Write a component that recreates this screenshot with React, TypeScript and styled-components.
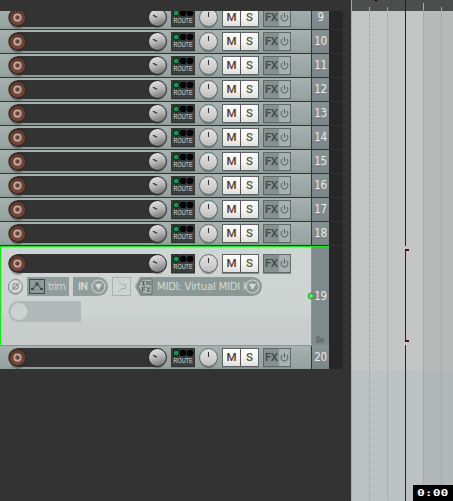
import React from "react";
import styled, { createGlobalStyle } from "styled-components";

const GlobalStyle = createGlobalStyle`
  html, body { margin: 0; padding: 0; background: #333; overflow: hidden; }
  * { box-sizing: border-box; }
`;

const Screen = styled.div`
  display: flex;
  width: 453px;
  height: 501px;
  background: #333333;
  overflow: hidden;
  font-family: "DejaVu Sans Condensed", "DejaVu Sans", sans-serif;
`;

const TrackPanel = styled.div`
  width: 351px;
  height: 501px;
  padding-top: 11px;
`;

const TrackList = styled.div`
  height: 359px;
  overflow: hidden;
  display: flex;
  flex-direction: column;
  justify-content: flex-end;
`;

const TrackRow = styled.div<{ $last?: boolean }>`
  display: flex;
  flex: none;
  width: 343px;
  height: ${(p) => (p.$last ? 23 : 24)}px;
  margin-bottom: ${(p) => (p.$last ? 1 : 0)}px;
  border-bottom: ${(p) => (p.$last ? "none" : "1px solid #303534")};
  background: #262626;
`;

const Strip = styled.div`
  width: 312px;
  height: 23px;
  padding-top: 2px;
  border-right: 1px solid #303534;
  background: linear-gradient(#a5b0af 0 2px, #9da9a8 10px, #97a3a1 21px, #8f9e99 21px);
`;

const NumberCell = styled.div<{ $tall?: boolean }>`
  position: relative;
  width: 17px;
  height: ${(p) => (p.$tall ? 98 : 23)}px;
  display: flex;
  align-items: center;
  justify-content: center;
  background: ${(p) => (p.$tall ? "#80898b" : "linear-gradient(#879294, #7b8587)")};
  color: #e9ebeb;
  font-size: 11.5px;
  line-height: 14px;
  letter-spacing: -0.4px;
  padding-bottom: ${(p) => (p.$tall ? 0 : 1)}px;
`;

const Controls = styled.div`
  display: flex;
  height: 20px;
  padding-left: 8px;
`;

const NameBar = styled.div`
  width: 141px;
  height: 19px;
  margin: 0 -10px 0 -10px;
  background: #333333;
`;

const Dial = styled.svg<{ $gap?: number }>`
  display: block;
  flex: none;
  position: relative;
  overflow: visible;
  width: 19px;
  height: 19px;
  margin-left: ${(p) => p.$gap ?? 0}px;
`;

const Route = styled.div`
  display: flex;
  flex-direction: column;
  align-items: center;
  width: 24px;
  height: 19px;
  margin-left: 4px;
  background: #3b3f3f;
  border: 1px solid #303333;
  box-shadow: 0 1px #7d8986;
`;

const RouteLights = styled.svg`
  display: block;
  flex: none;
  width: 22px;
  height: 8px;
`;

const RouteLabel = styled.span`
  color: #dcdfde;
  font: 8px/8px "Liberation Sans", sans-serif;
  transform: scaleX(0.68);
`;

const ButtonPair = styled.div`
  display: flex;
  width: 37px;
  height: 19px;
  margin-left: 4px;
  border: 1px solid #5c6262;
  box-shadow: 0 1px #828d8b;
`;

const PushButton = styled.div<{ $color: string; $first?: boolean }>`
  width: ${(p) => (p.$first ? 18 : 17)}px;
  border-right: ${(p) => (p.$first ? "1px solid #555" : "none")};
  background: linear-gradient(#ffffff, #f2f2f2 60%, #dfdfdf);
  color: ${(p) => p.$color};
  font: 500 11.5px/17px Roboto, sans-serif;
  text-align: center;
`;

const FxBox = styled.div`
  display: flex;
  width: 28px;
  height: 19px;
  margin-left: 4px;
  border: 1px solid #606968;
  background: #a8b2b1;
  box-shadow: 0 1px #84908e;
`;

const FxLabel = styled.div`
  width: 15px;
  padding-left: 1px;
  background: #85918f;
  color: #414847;
  font: 500 11.5px/17px Roboto, sans-serif;
  letter-spacing: -0.6px;
`;

const PowerIcon = styled.svg`
  width: 11px;
  height: 17px;
`;

const SelectedRow = styled.div`
  display: flex;
  flex: none;
  width: 343px;
  height: 100px;
  background: #262626;
`;

const SelectedFrame = styled.div`
  position: relative;
  display: flex;
  width: 329px;
  height: 100px;
  border: 1px solid #00f808;
  border-right: none;
`;

const SelectedBody = styled.div`
  width: 311px;
  height: 98px;
  padding-top: 7px;
  border-right: 1px solid #00f808;
  background: linear-gradient(#cfd5d3 0, #ccd3d1 70px, #c9cdcb 70px, #c8cccc 98px);

  ${Controls} {
    padding-left: 7px;
    height: 23px;
  }
`;

const InputLine = styled.div`
  display: flex;
  height: 19px;
  padding-left: 7px;
  color: #cdd4d2;
`;

const PhaseIcon = styled.svg`
  flex: none;
  width: 15px;
  height: 19px;
  overflow: visible;
`;

const Trim = styled.div`
  display: flex;
  width: 42px;
  height: 19px;
  margin-left: 4px;
  padding: 2px 0 0 2px;
  gap: 3px;
  background: #909d9b;
  font: 11px/16px "DejaVu Sans Condensed", sans-serif;
  letter-spacing: -0.8px;
`;

const EnvelopeIcon = styled.svg`
  display: block;
  flex: none;
  width: 16px;
  height: 15px;
`;

const InputMode = styled.div`
  display: flex;
  width: 35px;
  height: 19px;
  margin-left: 4px;
  padding-left: 5px;
  border-radius: 0 10px 10px 0;
  background: #909d9b;
  font: 700 10.5px/19px Roboto, sans-serif;
  letter-spacing: -0.5px;
`;

const DropIcon = styled.svg`
  display: block;
  position: relative;
  flex: none;
  width: 15px;
  height: 19px;
  margin-left: auto;
  margin-right: 2px;
`;

const MonitorIcon = styled.svg`
  display: block;
  flex: none;
  width: 19px;
  height: 19px;
  margin-left: 4px;
`;

const InputSource = styled.div`
  display: flex;
  width: 127px;
  height: 19px;
  margin-left: 4px;
  border-radius: 0 10px 10px 0;
  background: #8b9896;
  clip-path: polygon(0 50%, 5px 0, 100% 0, 100% 100%, 5px 100%);
`;

const InFxIcon = styled.svg`
  flex: none;
  width: 18px;
  height: 19px;
`;

const SourceName = styled.div`
  width: 88px;
  margin-left: 4px;
  white-space: nowrap;
  color: #d5dbd9;
  font: 11px/19px "DejaVu Sans Condensed", sans-serif;
  letter-spacing: -0.16px;
`;

const Meter = styled.svg`
  display: block;
  width: 73px;
  height: 23px;
  margin: 4px 0 0 7px;
`;

const SelectionDot = styled.svg`
  position: absolute;
  left: 306px;
  top: 45px;
  width: 8px;
  height: 8px;
`;

const FolderIcon = styled.svg`
  position: absolute;
  right: 5px;
  bottom: 2px;
  width: 8px;
  height: 7px;
`;

const Arrange = styled.div`
  position: relative;
  width: 102px;
  height: 501px;
`;

const Timeline = styled.svg`
  display: block;
`;

const TimeBadge = styled.div`
  position: absolute;
  right: 0;
  bottom: 0;
  width: 40px;
  height: 16px;
  padding-left: 4px;
  background: #000;
`;

const TimeText = styled.div`
  width: 24px;
  color: #fff;
  font: 700 9.5px/15px "DejaVu Sans Mono", monospace;
  transform: scaleX(1.37);
  transform-origin: left;
`;

function RecordArm() {
  return (
    <Dial viewBox="0 0 19 19">
      <ellipse cx="10" cy="12" rx="8.5" ry="9" fill="#303533" opacity=".4" />
      <circle cx="9.5" cy="9.5" r="9.2" fill="#2c2a29" />
      <circle cx="9.5" cy="9.4" r="7.9" fill="url(#armFill)" />
      <circle cx="9.5" cy="9.5" r="3.2" fill="#68443a" stroke="#c6aea5" strokeWidth="1.7" />
    </Dial>
  );
}

function Knob({ pan }: { pan?: boolean }) {
  return (
    <Dial viewBox="0 0 19 19" $gap={pan ? 4 : 0}>
      <ellipse cx="9.5" cy="11.5" rx="8.5" ry="8.8" fill="#4d5553" opacity=".45" />
      <circle
        cx="9.5"
        cy="9.5"
        r="9"
        fill={pan ? "url(#panFill)" : "url(#volumeFill)"}
        stroke={pan ? "#636967" : "#202222"}
      />
      {pan ? (
        <path d="M9.5 4v5" stroke="#333" fill="none" />
      ) : (
        <path d="M5 7.2l4 2" stroke="#222" strokeWidth="1.2" fill="none" />
      )}
    </Dial>
  );
}

function TrackControls() {
  return (
    <Controls>
      <RecordArm />
      <NameBar />
      <Knob />
      <Route>
        <RouteLights viewBox="0 0 22 8">
          <circle cx="4.2" cy="4" r="3.4" fill="#07120c" />
          <circle cx="4.2" cy="4" r="2.5" fill="#0b9a50" />
          <circle cx="11" cy="4" r="3.3" fill="#000" />
          <circle cx="18" cy="4" r="3.3" fill="#000" />
        </RouteLights>
        <RouteLabel>ROUTE</RouteLabel>
      </Route>
      <Knob pan />
      <ButtonPair>
        <PushButton $first $color="#57372f">M</PushButton>
        <PushButton $color="#4f5a34">S</PushButton>
      </ButtonPair>
      <FxBox>
        <FxLabel>FX</FxLabel>
        <PowerIcon viewBox="0 0 11 17">
          <path d="M3.4 5.9a3.4 3.4 0 1 0 4.2 0M5.5 4.2v4.3" fill="none" stroke="#4f5958" />
        </PowerIcon>
      </FxBox>
    </Controls>
  );
}

function Track({ number, last }: { number: number; last?: boolean }) {
  return (
    <TrackRow $last={last}>
      <Strip>
        <TrackControls />
      </Strip>
      <NumberCell>{number}</NumberCell>
    </TrackRow>
  );
}

function Dropdown() {
  return (
    <DropIcon viewBox="0 0 15 19">
      <circle cx="7.5" cy="9.5" r="6.5" fill="#8c9997" stroke="#cad1cf" strokeWidth="1.2" />
      <path d="M3.8 6.8h7.4L7.5 13z" fill="#d3dad8" />
    </DropIcon>
  );
}

function SelectedTrack() {
  return (
    <SelectedRow>
      <SelectedFrame>
        <SelectedBody>
          <TrackControls />
          <InputLine>
            <PhaseIcon viewBox="0 0 15 19">
              <circle cx="7.5" cy="10.7" r="7.3" fill="#a4aba9" />
              <circle cx="7.5" cy="9.5" r="7" fill="#d3d8d6" stroke="#7d8684" />
              <circle cx="7.5" cy="9.5" r="2.8" fill="none" stroke="#737c7a" />
              <path d="M3.8 13.2l7.4-7.4" stroke="#737c7a" />
            </PhaseIcon>
            <Trim>
              <EnvelopeIcon viewBox="0 0 16 15">
                <rect x=".5" y=".5" width="15" height="14" fill="#8d9a98" stroke="#414c4a" />
                <path d="M3.5 10L8 4.8l4.5 5.2" fill="none" stroke="#3e4947" />
                <path d="M2 9h3v2H2zM6.5 3.5h3v3h-3zM11 9h3v2h-3z" fill="#3e4947" />
              </EnvelopeIcon>
              trim
            </Trim>
            <InputMode>
              IN
              <Dropdown />
            </InputMode>
            <MonitorIcon viewBox="0 0 19 19">
              <rect x=".5" y=".5" width="18" height="18" fill="none" stroke="#a9b2b0" />
              <path d="M6 4.5h1l3 3h3.5v4H10l-3 3H6" fill="none" stroke="#a4adab" />
            </MonitorIcon>
            <InputSource>
              <InFxIcon viewBox="0 0 18 19">
                <path d="M7 2h10v15H7L3 9.5z" fill="#a9b4b1" stroke="#65716e" />
                <path
                  d="M7 4.5h3M8.5 4.5v3M7 7.5h3M12 8V4l3 4V4M7.5 15v-5H11M7.5 12.5H10M12 10l3 5M15 10l-3 5"
                  stroke="#52605c"
                  fill="none"
                />
              </InFxIcon>
              <SourceName>MIDI: Virtual MIDI k</SourceName>
              <Dropdown />
            </InputSource>
          </InputLine>
          <Meter viewBox="0 0 73 23">
            <path d="M11 1h62v21H11a10.5 10.5 0 0 1 0-21z" fill="#b3b9b8" />
            <circle cx="11" cy="11.5" r="9.4" fill="#ccd2d0" stroke="#b0b8b5" strokeWidth="1.8" />
          </Meter>
        </SelectedBody>
        <NumberCell $tall>
          19
          <FolderIcon viewBox="0 0 8 7">
            <path d="M0 0h4v2h4v5H0z" fill="#6b7473" />
          </FolderIcon>
        </NumberCell>
        <SelectionDot viewBox="0 0 8 8">
          <circle cx="4" cy="4" r="2.8" fill="#5be564" stroke="#119d1c" />
        </SelectionDot>
      </SelectedFrame>
    </SelectedRow>
  );
}

const gridLines = [0, 18, 36, 72, 90];
const ticks = [
  { x: 0, y: 0 },
  { x: 18, y: 7 },
  { x: 36, y: 7 },
  { x: 72, y: 3 },
  { x: 90, y: 7 },
];

export default function App() {
  return (
    <>
      <GlobalStyle />
      <Screen>
        <TrackPanel>
          <TrackList>
            {[9, 10, 11, 12, 13, 14, 15, 16, 17, 18].map((n) => (
              <Track key={n} number={n} />
            ))}
            <SelectedTrack />
            <Track number={20} last />
          </TrackList>
        </TrackPanel>
        <Arrange>
          <Timeline width="102" height="501" viewBox="0 0 102 501" shapeRendering="crispEdges">
            <defs>
              <radialGradient id="armFill" cx=".5" cy=".7" r=".7">
                <stop offset="0" stopColor="#84503f" />
                <stop offset="1" stopColor="#5a362c" />
              </radialGradient>
              <linearGradient id="volumeFill" x1=".3" y1="0" x2=".6" y2="1">
                <stop offset="0" stopColor="#e5e5e5" />
                <stop offset=".5" stopColor="#b8b8b8" />
                <stop offset="1" stopColor="#747474" />
              </linearGradient>
              <linearGradient id="panFill" x1="0" y1="0" x2="0" y2="1">
                <stop offset="0" stopColor="#e0e0e0" />
                <stop offset=".6" stopColor="#d0d0d0" />
                <stop offset="1" stopColor="#bcbcbc" />
              </linearGradient>
            </defs>
            <rect width="102" height="11" fill="#4b4e4c" />
            <rect y="11" width="72" height="359" fill="#c4c6c5" />
            <rect x="72" y="11" width="30" height="359" fill="#b8bab9" />
            <rect y="370" width="72" height="131" fill="#bcc1c1" />
            <rect x="72" y="370" width="30" height="131" fill="#b1b7b6" />
            {gridLines.map((x) => (
              <path key={x} d={`M${x + 0.5} 11V501`} stroke="#989b9a" strokeDasharray="1 1" />
            ))}
            {ticks.map((t) => (
              <path key={t.x} d={`M${t.x + 0.5} ${t.y}V11`} stroke="#a7aaa8" />
            ))}
            <rect x="24" width="2" height="1" fill="#000" />
            <path d="M54 0h1v246h-1zM54 249h4v2h-3v89h3v2h-4zM54 345h1v156h-1z" fill="#4b1114" />
          </Timeline>
          <TimeBadge>
            <TimeText>0:00</TimeText>
          </TimeBadge>
        </Arrange>
      </Screen>
    </>
  );
}
